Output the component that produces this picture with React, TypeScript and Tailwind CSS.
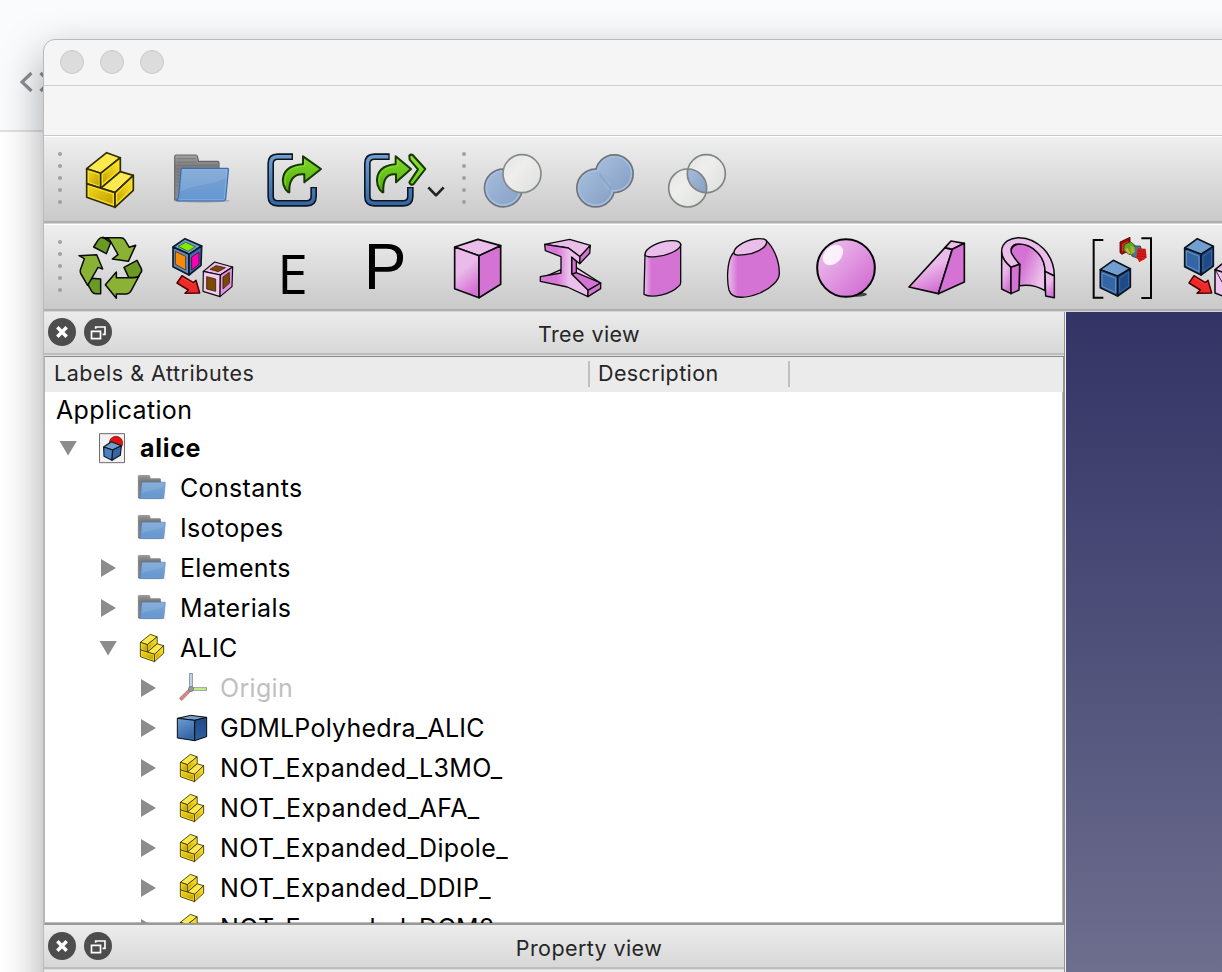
import type { ReactNode } from "react";

const INK = "#0b0b0b";

function Icon({ box, children, className = "size-16" }: { box: string; children: ReactNode; className?: string }) {
  return (
    <svg viewBox={box} className={`${className} shrink-0 overflow-visible`} strokeLinejoin="round">
      {children}
    </svg>
  );
}

function Defs() {
  return (
    <svg className="absolute size-0">
      <defs>
        <linearGradient id="gold" x1="0" y1="0" x2="1" y2="1">
          <stop offset="0" stopColor="#edd420" />
          <stop offset="1" stopColor="#c4a000" />
        </linearGradient>
        <linearGradient id="gold2" x1="1" y1="0" x2="0" y2="1">
          <stop offset="0" stopColor="#fbe42e" />
          <stop offset="1" stopColor="#c9a400" />
        </linearGradient>
        <linearGradient id="grayFolder" x1="0" y1="0" x2="0" y2="1">
          <stop offset="0" stopColor="#a3a3a3" />
          <stop offset="0.25" stopColor="#7d7d7d" />
          <stop offset="1" stopColor="#8b8b8b" />
        </linearGradient>
        <linearGradient id="blueFolder" x1="0" y1="0" x2="0" y2="1">
          <stop offset="0" stopColor="#7ba5d5" />
          <stop offset="1" stopColor="#6496d0" />
        </linearGradient>
        <linearGradient id="frame" gradientUnits="userSpaceOnUse" x1="0" y1="60" x2="0" y2="210">
          <stop offset="0" stopColor="#729fcf" />
          <stop offset="1" stopColor="#3465a4" />
        </linearGradient>
        <linearGradient id="green" x1="0" y1="0" x2="0" y2="1">
          <stop offset="0" stopColor="#7fdb2a" />
          <stop offset="1" stopColor="#50a808" />
        </linearGradient>
        <linearGradient id="greenB" x1="0" y1="0" x2="0" y2="1">
          <stop offset="0" stopColor="#8ae234" />
          <stop offset="1" stopColor="#6bcf17" />
        </linearGradient>
        <linearGradient id="soft" x1="0" y1="0" x2="1" y2="1">
          <stop offset="0" stopColor="#a6bedc" />
          <stop offset="1" stopColor="#869fc4" />
        </linearGradient>
        <linearGradient id="pale" x1="0" y1="0" x2="1" y2="1">
          <stop offset="0" stopColor="#e4e4e2" />
          <stop offset="0.4" stopColor="#eeeeec" />
          <stop offset="1" stopColor="#dededc" />
        </linearGradient>
        <linearGradient id="pinkV" x1="0" y1="0" x2="0.4" y2="1">
          <stop offset="0.5" stopColor="#eabbe9" />
          <stop offset="1" stopColor="#d573d5" />
        </linearGradient>
        <linearGradient id="pinkH" x1="0" y1="0" x2="1" y2="0">
          <stop offset="0" stopColor="#ebc0eb" />
          <stop offset="0.2" stopColor="#d573d5" />
        </linearGradient>
        <linearGradient id="pinkD" x1="0" y1="0" x2="1" y2="1">
          <stop offset="0.1" stopColor="#ecc0ec" />
          <stop offset="0.9" stopColor="#d36cd3" />
        </linearGradient>
        <linearGradient id="beam" x1="0" y1="0" x2="1" y2="0">
          <stop offset="0.35" stopColor="#d977d9" />
          <stop offset="0.6" stopColor="#ebbfeb" />
        </linearGradient>
        <linearGradient id="wall" x1="0" y1="0" x2="1" y2="0.5">
          <stop offset="0.45" stopColor="#d573d5" />
          <stop offset="1" stopColor="#ebc0eb" />
        </linearGradient>
        <linearGradient id="blueL" x1="0" y1="0" x2="0.4" y2="1">
          <stop offset="0" stopColor="#6f9dd2" />
          <stop offset="1" stopColor="#3465a4" />
        </linearGradient>
        <linearGradient id="blueR" x1="0" y1="0" x2="0" y2="1">
          <stop offset="0" stopColor="#204a87" />
          <stop offset="1" stopColor="#2f5f9f" />
        </linearGradient>
      </defs>
    </svg>
  );
}

function Bricks({ className }: { className?: string }) {
  return (
    <Icon box="234 444 192 192" className={className}>
      <g stroke="#302b00" strokeWidth="5">
        <path fill="#fce94f" d="M260 506 320 458 361 473 302 520Z" />
        <path fill="#f8df26" d="M260 506 302 520V565L260 551Z" />
        <path fill="#f5dc20" d="M302 520 361 473V515L302 565Z" />
        <path fill="#fce94f" d="M302 565 361 515 400 526 345 578Z" />
        <path fill="#f8df26" d="M260 551 345 578V622L260 592Z" />
        <path fill="#f5dc20" d="M345 578 400 526V571L345 622Z" />
      </g>
      <path fill="url(#gold)" d="M267 515 296 525V556L267 546Z" />
      <path fill="url(#gold2)" d="M309 523 354 487V511L309 549Z" />
      <path fill="url(#gold)" d="M267 561 338 583V612L267 587Z" />
      <path fill="url(#gold2)" d="M352 581 393 542V567L352 606Z" />
    </Icon>
  );
}

function Folder({ className }: { className?: string }) {
  return (
    <Icon box="510 444 192 192" className={className}>
      <ellipse cx="606" cy="602" rx="84" ry="6" fill="#000" opacity=".18" />
      <path fill="url(#grayFolder)" stroke="#666" strokeWidth="3.5" d="M524 600V470Q524 465 529 465H587Q591 465 592 469L596 484H653Q657 484 657 488V600Z" />
      <path stroke="#6e6e6e" strokeWidth="2" d="M530 476H586M530 486H590M530 496H650M530 506H540M530 516H540M530 526H540M530 536H538M530 546H538M530 556H538" />
      <path fill="url(#blueFolder)" stroke="#3a6cb0" strokeWidth="3.5" d="M546 505H682Q686 505 685.500 509L677 597Q676 603 670 603H534Q528 603 531 598Q535 595 536 588L543 510Q543 505 546 505Z" />
      <path fill="#fff" opacity=".1" d="M547 509H681L679 530C650 555 590 550 541 574Z" />
      <path fill="none" stroke="#a4c3e6" strokeWidth="2" opacity=".7" d="M547 509H681L673 595Q672 599 668 599H538" />
    </Icon>
  );
}

function ExportFrame() {
  const d = "M159 65H113Q92 65 92 86V184Q92 205 113 205H200Q221 205 221 184V156";
  return (
    <g fill="none">
      <path d={d} stroke="#0b1521" strokeWidth="20" strokeLinecap="butt" />
      <path d="M155 65H113Q92 65 92 86V184Q92 205 113 205H200Q221 205 221 184V160" stroke="url(#frame)" strokeWidth="10.500" />
    </g>
  );
}

function Cube({ p, top, left, right, stroke = INK, w = 5 }: { p: number[]; top: string; left: string; right: string; stroke?: string; w?: number }) {
  const q = (i: number) => `${p[i * 2]},${p[i * 2 + 1]}`;
  return (
    <g stroke={stroke} strokeWidth={w}>
      <polygon fill={top} points={`${q(0)} ${q(1)} ${q(2)} ${q(6)}`} />
      <polygon fill={left} points={`${q(0)} ${q(6)} ${q(4)} ${q(5)}`} />
      <polygon fill={right} points={`${q(6)} ${q(2)} ${q(3)} ${q(4)}`} />
    </g>
  );
}

function RedArrow({ dx = 0 }: { dx?: number }) {
  return (
    <g transform={`translate(${dx} 0)`}>
      <path fill="#ef2929" stroke="#4a0000" strokeWidth="4.500" d="M414 161 448 182 456 175 467 213 423 214 433 204 399 183Z" />
      <path fill="none" stroke="#ff6060" strokeWidth="1.500" d="M415 167 448 187 454 182" />
    </g>
  );
}

function Origin() {
  return (
    <Icon box="396 426 96 96" className="size-8">
      <path stroke="#8f8f8f" strokeWidth="11" d="M441 477V429M441 477H489M441 477 409 509" />
      <path stroke="#b7d3f2" strokeWidth="6" d="M441 475V432" />
      <path stroke="#b9ee84" strokeWidth="6" d="M443 477H486" />
      <path stroke="#ef8080" strokeWidth="6.500" d="M439 479 411 507" />
      <circle cx="441" cy="477" r="7.500" fill="#999" stroke="#777" strokeWidth="2.500" />
    </Icon>
  );
}

function Polyhedra() {
  return (
    <Icon box="396 546 96 96" className="size-8">
      <Cube p={[400, 565, 440, 556, 488, 562, 488, 620, 452, 632, 400, 624, 452, 571]} top="#729fcf" left="url(#blueL)" right="url(#blueR)" w={3} />
    </Icon>
  );
}

function DocIcon() {
  return (
    <Icon box="156 246 96 96" className="size-8">
      <rect x="166.500" y="251" width="75" height="87" fill="#f2f2f2" stroke="#6d6d6d" strokeWidth="3" />
      <circle cx="216" cy="279" r="20" fill="#e01212" stroke="#7d0000" strokeWidth="2" />
      <Cube p={[179, 291, 202, 275, 232, 287, 229, 316, 204, 331, 180, 319, 206, 300]} top="#729fcf" left="#4a7fc0" right="#3465a4" w={3.5} stroke="#101820" />
    </Icon>
  );
}

function Grip() {
  return (
    <div className="flex w-1 shrink-0 flex-col gap-2">
      {[0, 1, 2, 3, 4].map((i) => (
        <span key={i} className="size-1 rounded-full bg-[#a0a0a0]" />
      ))}
    </div>
  );
}

function FileToolbar() {
  return (
    <div className="flex h-[88px] shrink-0 items-start border-t border-white bg-linear-to-b from-[#efefef] to-[#c8c8c8] pl-[14px] shadow-[inset_0_-1px_0_#d4d4d4,inset_0_-3px_0_#aeaeae]">
      <div className="flex pt-[15px]"><Grip /></div>
      <div className="ml-4 flex gap-7 pt-[11px]">
        <Bricks className="size-16" />
        <Folder className="size-16" />
        <Icon box="66 39 192 192">
          <ExportFrame />
          <path fill="url(#green)" stroke="#173600" strokeWidth="6" d="M145 172C118 150 118 92 189 88V64L243 102 193 142V118C160 114 146 138 148 172Z" />
          <path fill="none" stroke="#8fe544" strokeWidth="2" d="M137 150C130 120 146 95 194 93V73" />
        </Icon>
        <Icon box="342 39 288 192" className="h-16 w-24">
          <g transform="translate(290 0)"><ExportFrame /></g>
          <path fill="url(#green)" stroke="#173600" strokeWidth="6" d="M427 172C400 150 402 92 467 88V64L513 102 468 142V118C438 114 428 138 430 172Z" />
          <path fill="none" stroke="#8fe544" strokeWidth="2" d="M419 150C412 120 428 95 472 93V73" />
          <path fill="url(#greenB)" stroke="#173600" strokeWidth="6" d="M508 62Q512 57 518 60L556 102 520 148Q512 152 508 142L534 103 509 74Z" />
          <path fill="none" stroke="#222" strokeWidth="8" d="M565 157 588 181 611 157" />
        </Icon>
      </div>
      <div className="ml-3 flex pt-[15px]"><Grip /></div>
      <div className="ml-[15px] flex gap-7 pt-[11px]">
        <Icon box="34 39 192 192">
          <circle cx="101" cy="159" r="56.500" fill="url(#soft)" stroke="#6f747b" strokeWidth="5" />
          <circle cx="101" cy="159" r="51" fill="none" stroke="#a5bfe0" strokeWidth="5" />
          <circle cx="157" cy="116" r="57" fill="url(#pale)" stroke="#858a88" strokeWidth="5" />
        </Icon>
        <Icon box="309 39 192 192">
          <g fill="none" stroke="#6f747b" strokeWidth="9">
            <circle cx="377" cy="159" r="54.500" />
            <circle cx="433" cy="116" r="54.500" />
          </g>
          <g fill="#a5bfe0">
            <circle cx="377" cy="159" r="54" />
            <circle cx="433" cy="116" r="54" />
          </g>
          <circle cx="433" cy="116" r="49" fill="url(#soft)" />
          <circle cx="377" cy="159" r="49" fill="url(#soft)" />
          <path fill="#98b2d4" d="M392 108 424 146 414 168 374 112Z" />
          <path d="M390 120 420 158" stroke="#7d98bf" strokeWidth="6" strokeLinecap="round" opacity=".5" />
        </Icon>
        <Icon box="585 39 192 192">
          <circle cx="709" cy="116" r="57" fill="url(#pale)" />
          <circle cx="653" cy="159" r="57" fill="url(#pale)" />
          <path fill="url(#soft)" d="M653.800 102.100A57 57 0 0 1 707.200 172.900A57 57 0 0 1 653.800 102.100Z" />
          <g fill="none" stroke="#7f8482" strokeWidth="5">
            <circle cx="709" cy="116" r="57" />
            <circle cx="653" cy="159" r="57" />
          </g>
        </Icon>
      </div>
    </div>
  );
}

function ShapeToolbar() {
  return (
    <div className="flex h-[88px] shrink-0 items-start border-t border-white bg-linear-to-b from-[#efefef] to-[#c8c8c8] pl-[14px] shadow-[inset_0_-1px_0_#d4d4d4,inset_0_-3px_0_#aeaeae]">
      <div className="flex pt-[15px]"><Grip /></div>
      <div className="ml-4 flex gap-7 pt-[11px]">
        <Icon box="102 42 192 192">
          <g stroke={INK} strokeWidth="4.500">
            <path fill="#6a9a24" d="M149 75 163 53Q168 46 178 46L200 62 187 95Z" />
            <path fill="#8ab335" d="M176 47H230Q238 47 242 53L256 76 275 70 253 118 205 111 222 98 199 57Q192 47 176 47Z" />
            <path fill="#6a9a24" d="M240 136 279 115 292 140Q295 148 289 154L283 164Q268 168 254 166Z" />
            <path fill="#8ab335" d="M184 188 217 150V167H268Q282 167 286 160L262 205Q256 216 245 216H217V229Z" />
            <path fill="#6a9a24" d="M144 169 170 171V215H156Q147 215 143 208L130 185Z" />
            <path fill="#8ab335" d="M105 101 158 98 176 141 162 136 131 190 111 156Q107 149 110 141L121 110Z" />
          </g>
        </Icon>
        <Icon box="378 42 192 192">
          <Cube p={[387, 75, 423, 50, 473, 72, 471, 130, 435, 159, 387, 134, 435, 97]} top="#6e9bd0" left="#5e8cc4" right="#416fa9" stroke="#0b1a2a" />
          <path fill="#82ec00" stroke="#24460a" strokeWidth="2" d="M403 73 425 61 454 74 432 88Z" />
          <path fill="#f78a0c" stroke="#4b3008" strokeWidth="2.500" d="M394 88 425 103V144L394 127Z" />
          <path fill="#ff00b4" stroke="#4b0838" strokeWidth="2.500" d="M443 105 465 90V127L443 144Z" />
          <RedArrow />
          <Cube p={[478, 148, 512, 120, 566, 135, 564, 194, 528, 224, 477, 208, 529, 159]} top="#ecbdec" left="#f1caf1" right="#e093e0" w={3.5} />
          <g fill="#7c4a08" stroke="#3b2102" strokeWidth="2.500">
            <path d="M498 142 516 131 544 137 523 149Z" />
            <path d="M488 164 515 171V208L488 201Z" />
            <path d="M537 165 556 151V184L537 201Z" />
          </g>
        </Icon>
        <div className="flex size-16 shrink-0 items-center justify-center pr-[3px] pt-[8px] font-['Open_Sans',sans-serif] text-[55px] leading-none text-black">E</div>
        <div className="flex size-16 shrink-0 items-center justify-center pb-[3px] pr-[2px] font-['Liberation_Sans',sans-serif] text-[64px] leading-none text-black">P</div>
        <Icon box="366 42 192 192">
          <Cube p={[392, 75, 462, 52, 530, 71, 530, 187, 465, 227, 392, 200, 465, 101]} top="#ebbdea" left="url(#pinkV)" right="#d573d5" />
        </Icon>
        <Icon box="642 42 192 192">
          <g stroke={INK} strokeWidth="4">
            <path fill="#f1ccf1" d="M672 160 711 143V157ZM757 137 830 183 757 154Z" />
            <path fill="#d573d5" d="M743 156 757 152 830 183 792 205Z" />
            <path fill="#d573d5" d="M743 105 757 118V152L743 156Z" />
            <path fill="#ebbdea" d="M662 67 737 52 799 70 768 104 733 78Z" />
            <path fill="url(#beam)" d="M662 67 733 78 768 104 767 125 743 105V156L792 205V224L730 195 649 178V164L711 153V104L664 86Z" />
            <path fill="#d573d5" d="M768 104 799 70 797 94 767 125ZM792 205 830 183V200L792 224Z" />
          </g>
        </Icon>
        <Icon box="60 42 192 192">
          <g stroke={INK} strokeWidth="4">
            <path fill="url(#pinkH)" d="M105 97 102 217C125 229 180 219 206 193Q212 188 212 182V66Z" />
            <path fill="#ebbdea" d="M105 98C104 80 143 58 183 56C205 55 213 62 212 70C207 86 168 102 138 104C118 106 106 104 105 98Z" />
          </g>
        </Icon>
        <Icon box="336 42 192 192">
          <g stroke={INK} strokeWidth="4">
            <path fill="url(#pinkH)" d="M372 91C350 110 350 175 357 204C366 234 410 229 450 213C484 198 509 174 508 154C508 110 487 72 469 56Z" />
            <path fill="#ebbdea" d="M373 96C366 80 400 56 436 51C458 48 472 52 470 62C468 80 432 95 405 98C388 100 377 101 373 96Z" />
          </g>
        </Icon>
        <Icon box="612 42 192 192">
          <ellipse cx="740" cy="217" rx="31" ry="7" fill="#444" />
          <circle cx="708" cy="138" r="86.500" fill="url(#pinkD)" stroke="#050505" strokeWidth="6" />
          <ellipse cx="669" cy="99" rx="35" ry="25" fill="#fff" opacity=".82" transform="rotate(-45 669 99)" />
        </Icon>
        <Icon box="48 42 192 192">
          <g stroke={INK} strokeWidth="5">
            <path fill="url(#pinkV)" d="M57 195 165 77 187 82 145 215Z" />
            <path fill="#ebbdea" d="M165 77 183 57 223 64 187 82Z" />
            <path fill="#d573d5" d="M187 82 223 64V180L145 215Z" />
          </g>
        </Icon>
        <Icon box="324 42 192 192">
          <g stroke={INK} strokeWidth="4.500">
            <path fill="url(#wall)" d="M389 127C370 112 360 98 363 84C370 64 395 62 415 70C450 88 465 118 465 148V206C440 190 410 188 388 191Z" />
            <path fill="#ebbdea" d="M335 92C333 58 365 47 388 47C440 48 493 95 493 162L465 148C465 105 430 67 388 66C364 66 358 82 367 98C374 110 382 119 389 127L363 136C350 125 336 108 335 92Z" />
            <path fill="url(#pinkV)" d="M335 92C336 108 350 125 363 136V215L335 201Z" />
            <path fill="#d573d5" d="M363 136 389 127 387 204 363 215Z" />
            <path fill="url(#pinkV)" d="M465 148 493 162V227L467 222Z" />
          </g>
        </Icon>
        <Icon box="601 42 192 192">
          <path fill="none" stroke="#050505" strokeWidth="6" strokeLinejoin="miter" d="M641 54H612V227H641M755 49H784V228H755" />
          <Cube p={[632, 143, 671, 115, 722, 140, 722, 195, 684, 222, 632, 197, 684, 163]} top="#729fcf" left="#3465a4" right="#204a87" stroke="#0b1521" />
          <path fill="none" stroke="#729fcf" strokeWidth="2.500" d="M637 153 678 169V212L637 193Z" />
          <path fill="none" stroke="#3d6fb0" strokeWidth="2.500" d="M690 169 717 150V192L690 212Z" />
          <path fill="#a80808" stroke="#3c0505" strokeWidth="2.500" d="M691 60 721 46V84L697 97 691 92Z" />
          <path fill="#d03028" d="M697 66 716 57V76L697 90Z" />
          <path fill="#63a81c" stroke="#35421a" strokeWidth="2.500" d="M704 68 722 59 738 72 732 97 718 97 702 86Z" />
          <path fill="#e7a92c" d="M706 82 714 78 722 94 716 96Z" />
          <path fill="#50748c" stroke="#2b3d46" strokeWidth="2.500" d="M734 72 752 72 758 90 744 109 726 102Z" />
          <path fill="#98b83a" d="M722 72 734 74 736 90 724 98Z" />
          <path fill="#d91a1a" d="M744 79 768 80 771 107 749 121 740 105Z" />
          <path stroke="#7b1010" strokeWidth="2" strokeDasharray="4 3" d="M746 86 769 88M744 94 770 96M742 102 770 104M746 110 764 112" />
        </Icon>
        <Icon box="876 42 192 192">
          <Cube p={[884, 78, 922, 50, 970, 73, 970, 132, 933, 159, 884, 134, 933, 97]} top="#729fcf" left="#3465a4" right="#204a87" stroke="#0b1521" />
          <path fill="none" stroke="#729fcf" strokeWidth="2.500" d="M889 87 927 103V149L889 130Z" />
          <path fill="none" stroke="#3d6fb0" strokeWidth="2.500" d="M939 103 965 85V129L939 149Z" />
          <RedArrow dx={498} />
          <Cube p={[975, 143, 1010, 115, 1062, 135, 1060, 195, 1024, 232, 975, 213, 1026, 160]} top="#ecbdec" left="#efc6ef" right="#e093e0" w={4.5} />
          <path d="M978 147 996 180" stroke={INK} strokeWidth="2.500" />
        </Icon>
      </div>
    </div>
  );
}

function DockTitle({ title }: { title: string }) {
  return (
    <div className="flex h-[44px] shrink-0 items-start bg-linear-to-b from-[#ececec] to-[#d6d6d6] pl-1 shadow-[inset_0_-1px_0_#dedede,inset_0_-3px_0_#bdbdbd]">
      <div className="flex gap-2 pt-[6px]">
        <Icon box="12 288 84 84" className="size-7">
          <circle cx="54" cy="330" r="42" fill="#4d4d4d" />
          <path d="M40 316 68 344M68 316 40 344" stroke="#fff" strokeWidth="10.500" />
        </Icon>
        <Icon box="120 288 84 84" className="size-7">
          <circle cx="162" cy="330" r="42" fill="#4d4d4d" />
          <path fill="none" stroke="#fff" strokeWidth="5" strokeLinejoin="miter" d="M155 320V315H183V337H176" />
          <path fill="none" stroke="#fff" strokeWidth="5" strokeLinejoin="miter" d="M142.500 328H169.500V350H142.500Z" />
        </Icon>
      </div>
      <div className="flex-1 pl-[2px] pt-[8px] text-center text-[21.500px] leading-[28px] tracking-[0.4px] text-[#262626]">{title}</div>
    </div>
  );
}

type Item = { level: number; label: string; open?: boolean; leaf?: boolean; icon: ReactNode; tone?: string };

const small = "size-8";
const items: Item[] = [
  { level: 0, label: "alice", open: true, icon: <DocIcon />, tone: "font-bold text-black tracking-[0.7px]" },
  { level: 1, label: "Constants", leaf: true, icon: <Folder className={small} /> },
  { level: 1, label: "Isotopes", leaf: true, icon: <Folder className={small} /> },
  { level: 1, label: "Elements", icon: <Folder className={small} /> },
  { level: 1, label: "Materials", icon: <Folder className={small} /> },
  { level: 1, label: "ALIC", open: true, icon: <Bricks className={small} /> },
  { level: 2, label: "Origin", icon: <Origin />, tone: "text-[#bfbfbf] tracking-[0.32px]" },
  { level: 2, label: "GDMLPolyhedra_ALIC", icon: <Polyhedra />, tone: "text-black tracking-[0.24px]" },
  { level: 2, label: "NOT_Expanded_L3MO_", icon: <Bricks className={small} /> },
  { level: 2, label: "NOT_Expanded_AFA_", icon: <Bricks className={small} />, tone: "text-black tracking-[0.44px]" },
  { level: 2, label: "NOT_Expanded_Dipole_", icon: <Bricks className={small} /> },
  { level: 2, label: "NOT_Expanded_DDIP_", icon: <Bricks className={small} /> },
  { level: 2, label: "NOT_Expanded_DCM2_", icon: <Bricks className={small} /> },
];

const indents = ["pl-[11px]", "pl-[51px]", "pl-[91px]"];

function Row({ item }: { item: Item }) {
  return (
    <div className={`flex h-10 shrink-0 items-center ${indents[item.level]}`}>
      <svg viewBox="0 0 24 24" className="size-6 shrink-0" fill="#8c8c8c">
        {item.leaf ? null : item.open ? <path d="M3.500 5H20.800L12.100 19.500Z" /> : <path d="M5 3V21L20 12Z" />}
      </svg>
      <div className="ml-4 flex">{item.icon}</div>
      <div className={`ml-3 whitespace-nowrap text-[25px] leading-10 ${item.tone ?? "text-black tracking-[0.34px]"}`}>{item.label}</div>
    </div>
  );
}

function TreeView() {
  return (
    <div className="mb-px flex h-[569px] shrink-0 flex-col overflow-hidden border-b-2 border-l border-r border-t border-b-[#999] border-l-[#b4b4b4] border-r-[#929292] border-t-[#8a8a8a] bg-white shadow-[inset_-1px_-1px_0_#bbb]">
      <div className="flex h-[35px] shrink-0 items-start bg-[#ebebeb] pt-1 text-[21.500px] leading-[26px] text-[#262626]">
        <div className="flex h-[26px] w-[545px] border-r-2 border-[#c0c0c0] pl-[9px] tracking-[0.52px]"><span className="-mt-px">Labels &amp; Attributes</span></div>
        <div className="flex h-[26px] w-[200px] border-r-2 border-[#c0c0c0] pl-2 tracking-[0.38px]"><span className="-mt-px">Description</span></div>
      </div>
      <div className="mr-px flex min-h-0 flex-1 flex-col overflow-hidden">
        <div className="h-9 shrink-0 pl-[11px] text-[25px] leading-9 tracking-[0.34px] text-black">Application</div>
        {items.map((item) => (
          <Row key={item.label} item={item} />
        ))}
      </div>
    </div>
  );
}

export default function App() {
  return (
    <div className="relative h-[972px] w-[1222px] overflow-hidden bg-white font-[Inter,sans-serif]">
      <Defs />
      <div className="flex h-[132px] border-b-2 border-[#dfe1e5] bg-[#fafbfc] pl-5 pt-[71px]">
        <svg viewBox="0 0 32 22" className="h-[22px] w-8" fill="none" stroke="#8b8e95" strokeWidth="3.200">
          <path d="M11.500 2 2 11 11.500 20M20.500 2 30 11 20.500 20" />
        </svg>
      </div>
      <div className="absolute left-[43px] top-[39px] flex h-[1100px] w-[1400px] flex-col overflow-hidden rounded-tl-[12px] border border-[#b9bbba] bg-[#f5f5f5] shadow-[0_16px_44px_rgba(0,0,0,0.36)]">
        <div className="flex h-[46px] shrink-0 gap-4 border-b border-[#cfcfcf] pl-4 pt-[10px]">
          {[0, 1, 2].map((i) => (
            <span key={i} className="size-6 rounded-full border border-[#cbcbcb] bg-[#dcdcdc]" />
          ))}
        </div>
        <div className="h-[50px] shrink-0 border-b border-[#c9c9c9]" />
        <FileToolbar />
        <ShapeToolbar />
        <div className="flex min-h-0 flex-1">
          <div className="flex w-[1021px] shrink-0 flex-col border-r border-[#929292] bg-[#ececec]">
            <DockTitle title="Tree view" />
            <TreeView />
            <DockTitle title="Property view" />
          </div>
          <div className="w-px shrink-0 bg-[#f2f2f2]" />
          <div className="h-[660px] flex-1 bg-linear-to-b from-[#333365] to-[#6e6e8e]" />
        </div>
      </div>
    </div>
  );
}
